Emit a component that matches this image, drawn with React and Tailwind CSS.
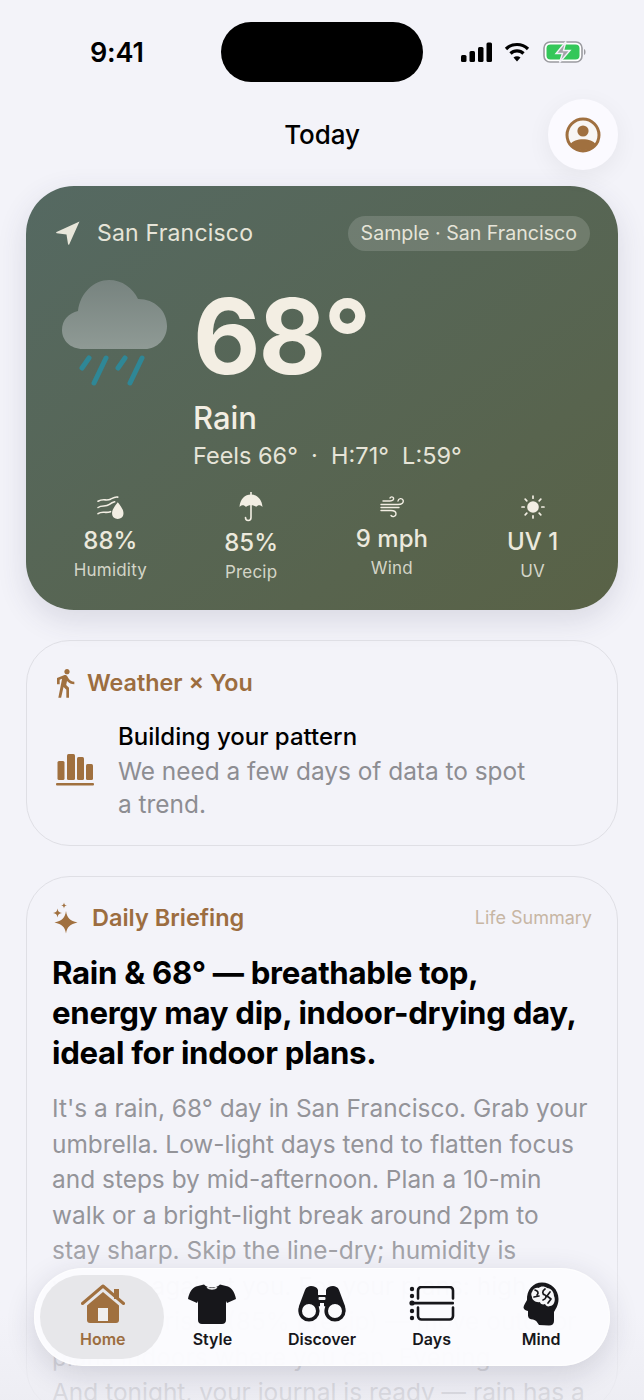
import React from "react";
import { MdDirectionsWalk } from "react-icons/md";

const FONT = { fontFamily: "Inter, 'Noto Sans', sans-serif" };

function StatusIcons() {
  return (
    <div className="flex items-center">
      <svg width="32" height="20" viewBox="0 0 32 20" fill="#000">
        <rect x="0" y="13" width="5.5" height="7" rx="1.5" />
        <rect x="8.5" y="9" width="5.5" height="11" rx="1.5" />
        <rect x="17" y="5" width="5.5" height="15" rx="1.5" />
        <rect x="25.5" y="0.5" width="5.5" height="19.5" rx="1.5" />
      </svg>
      <svg width="26" height="20" viewBox="0 0 25 20" fill="none" stroke="#000" strokeWidth="3.2" className="ml-[11px]">
        <path d="M1.5 7 C7.5 1 17.5 1 23.5 7" />
        <path d="M6 11.5 C9.5 8 15.5 8 19 11.5" />
        <path d="M12.5 19.5 L9 15.5 C11 13.8 14 13.8 16 15.5 Z" fill="#000" stroke="none" />
      </svg>
      <svg width="44" height="22" viewBox="0 0 44 22" className="ml-[13px]">
        <rect x="1" y="1" width="38" height="20" rx="6" fill="#fff" stroke="#9b9ba0" strokeWidth="1.6" />
        <rect x="3.5" y="3.5" width="33" height="15" rx="4" fill="#34c759" />
        <path d="M41 8 C43 8.5 43 13.5 41 14 Z" fill="#9b9ba0" />
        <path d="M23 0.5 L13 12.5 H19.5 L16.5 21.5 L27 9.5 H20.5 Z" fill="#a3a3a8" stroke="#f3f3f9" strokeWidth="1.4" />
      </svg>
    </div>
  );
}

function AvatarIcon() {
  return (
    <svg width="36" height="36" viewBox="0 0 36 36">
      <circle cx="18" cy="18" r="16" fill="#f8f6f4" stroke="#a0703f" strokeWidth="3" />
      <circle cx="18" cy="14" r="5.6" fill="#a0703f" />
      <path d="M5.5 27 C9 20.5 27 20.5 30.5 27 C27 35 9 35 5.5 27 Z" fill="#a0703f" />
    </svg>
  );
}

function CloudRain() {
  return (
    <svg width="106" height="106" viewBox="0 0 106 106">
      <defs>
        <linearGradient id="cloudFill" x1="0" y1="0" x2="0" y2="1">
          <stop offset="0" stopColor="#77837f" />
          <stop offset="1" stopColor="#8f9a95" />
        </linearGradient>
      </defs>
      <path
        d="M21 69 C8 69 0 60 0 50 C0 40 7 33 16 31 C18 13 32 0 47 0 C60 0 71 8 76 19 C93 19 105 31 105 46 C105 59 95 69 83 69 Z"
        fill="url(#cloudFill)"
      />
      <g stroke="#2f8796" strokeWidth="5" strokeLinecap="round" fill="none">
        <path d="M27 78 L20 88" />
        <path d="M44 78 L32 103" />
        <path d="M63 78 L56 88" />
        <path d="M80 78 L68 103" />
      </g>
    </svg>
  );
}

function HumidityIcon() {
  return (
    <svg width="27" height="25" viewBox="0 0 26 24" fill="none" stroke="#f2eee3" strokeWidth="1.5" strokeLinecap="round">
      <path d="M1 6 C6 3 9 6 13 4 C15 3 17 1.5 20 2" />
      <path d="M1 12 C5 9 8 12 12 9 C14 7.5 15 7 17 6.5" />
      <path d="M1 18 C5 15 8 18 13 16" />
      <path d="M20 7 C17 11 14.5 14 14.5 17.5 C14.5 21 17 23 20 23 C23 23 25.5 21 25.5 17.5 C25.5 14 23 11 20 7 Z" fill="#f2eee3" stroke="none" />
    </svg>
  );
}

function UmbrellaIcon() {
  return (
    <svg width="24" height="30" viewBox="0 0 24 30" fill="none">
      <path d="M12 0 V3" stroke="#f2eee3" strokeWidth="1.6" />
      <path d="M0.5 15 C1 7 6 2.5 12 2.5 C18 2.5 23 7 23.5 15 C21.5 12.5 19 12.5 17 15 C15.5 12.5 8.5 12.5 7 15 C5 12.5 2.5 12.5 0.5 15 Z" fill="#f2eee3" />
      <path d="M12 13 V25.5 C12 29.5 6.5 29.5 6.5 25.5" stroke="#f2eee3" strokeWidth="1.6" strokeLinecap="round" />
    </svg>
  );
}

function WindIcon() {
  return (
    <svg width="24" height="22" viewBox="0 0 24 22" fill="none" stroke="#f2eee3" strokeWidth="1.4" strokeLinecap="round">
      <path d="M1 8.5 H18 C22 8.5 24 6.5 23 4 C22 2 18.5 2 18 5" />
      <path d="M1 11.5 H19" />
      <path d="M3 5 H10 C13 5 14 3.5 13.5 2 C13 0.5 10.5 0.5 10 2" />
      <path d="M1 14.5 H11 C14.5 14.5 16 16 16 18 C16 20.5 12.5 21.5 11 19.5" />
    </svg>
  );
}

function SunIcon() {
  return (
    <svg width="24" height="24" viewBox="0 0 24 24" fill="none" stroke="#f2eee3" strokeWidth="1.7" strokeLinecap="round">
      <circle cx="12" cy="12" r="5.8" fill="#f2eee3" stroke="none" />
      <path d="M12 1 V3.2 M12 20.8 V23 M1 12 H3.2 M20.8 12 H23 M4.2 4.2 L5.8 5.8 M18.2 18.2 L19.8 19.8 M19.8 4.2 L18.2 5.8 M5.8 18.2 L4.2 19.8" />
    </svg>
  );
}

function ChartIcon() {
  return (
    <svg width="38" height="33" viewBox="0 0 38 33" fill="#a0703f">
      <rect x="1.5" y="8" width="7" height="19" rx="1.5" />
      <rect x="11" y="1" width="8" height="26" rx="1.5" />
      <rect x="21" y="4" width="7" height="23" rx="1.5" />
      <rect x="30" y="11" width="7" height="16" rx="1.5" />
      <rect x="0" y="30" width="38" height="2.6" rx="1" />
    </svg>
  );
}

function SparkleIcon() {
  return (
    <svg width="26" height="32" viewBox="0 0 26 32" fill="#a0703f">
      <path d="M14 9 C15 16 18 19 25.5 20.5 C18 22 15 25 14 31.5 C13 25 10 22 2.5 20.5 C10 19 13 16 14 9 Z" />
      <path d="M5.5 6.5 C6 9.5 7 10.5 10 11 C7 11.5 6 12.5 5.5 15.5 C5 12.5 4 11.5 1 11 C4 10.5 5 9.5 5.5 6.5 Z" />
      <path d="M12 0.5 C12.3 2.5 13 3.2 15 3.5 C13 3.8 12.3 4.5 12 6.5 C11.7 4.5 11 3.8 9 3.5 C11 3.2 11.7 2.5 12 0.5 Z" />
    </svg>
  );
}

function HomeIcon() {
  return (
    <svg width="44" height="40" viewBox="0 0 44 40">
      <path d="M1.5 19.5 L22 2 L42.5 19.5" fill="none" stroke="#a0703f" strokeWidth="3" strokeLinecap="round" strokeLinejoin="round" />
      <rect x="33" y="5" width="5" height="10" fill="#a0703f" />
      <path d="M6 21.5 L22 8 L38 21.5 V36 C38 38 37 39 35 39 H9 C7 39 6 38 6 36 Z" fill="#a0703f" />
      <rect x="17" y="24" width="10" height="13" fill="#f0efef" />
    </svg>
  );
}

function ShirtIcon() {
  return (
    <svg width="48" height="40" viewBox="0 0 48 40" fill="#17171b">
      <path d="M16 0.5 C19 4.5 29 4.5 32 0.5 L40 2.5 C44 4 47 9 48 15 L39 19 L38 17 V36 C38 38.5 36.5 40 34 40 H14 C11.5 40 10 38.5 10 36 V17 L9 19 L0 15 C1 9 4 4 8 2.5 Z" />
      <path d="M18.5 3.5 C21 6.5 27 6.5 29.5 3.5 L28 2.8 C26 4.5 22 4.5 20 2.8 Z" fill="#e8e8ea" />
    </svg>
  );
}

function BinocularsIcon() {
  return (
    <svg width="48" height="36" viewBox="0 0 48 36">
      <path d="M7 4 C8 1 11 0 13 0 C16 0 19 1 20 4 V9 H28 V4 C29 1 32 0 35 0 C37 0 40 1 41 4 L47 20 C48 24 47 27 46 29 L26 20 V17 H22 V20 L2 29 C1 27 0 24 1 20 Z" fill="#17171b" />
      <rect x="20.5" y="11" width="7" height="3" rx="1" fill="#f4f4f6" />
      <circle cx="11" cy="25" r="8.8" fill="#fbfbfd" stroke="#17171b" strokeWidth="3.6" />
      <circle cx="37" cy="25" r="8.8" fill="#fbfbfd" stroke="#17171b" strokeWidth="3.6" />
    </svg>
  );
}

function DaysIcon() {
  return (
    <svg width="46" height="36" viewBox="0 0 46 36" fill="#17171b">
      <circle cx="3" cy="3" r="2.2" />
      <circle cx="3" cy="10" r="2.2" />
      <circle cx="3" cy="17" r="2.6" />
      <circle cx="3" cy="25" r="2.2" />
      <circle cx="3" cy="32" r="2.2" />
      <rect x="3" y="15.8" width="42" height="2.6" rx="1" />
      <path d="M9 12.5 V4.5 C9 2.5 10.5 1 12.5 1 H40.5 C42.5 1 44 2.5 44 4.5 V12.5 M44 21.5 V30 C44 32 42.5 33.5 40.5 33.5 H12.5 C10.5 33.5 9 32 9 30 V21.5" fill="none" stroke="#17171b" strokeWidth="2.6" strokeLinecap="round" />
    </svg>
  );
}

function MindIcon() {
  return (
    <svg width="36" height="44" viewBox="0 0 36 44">
      <path d="M19 0.5 C28 0.5 35.5 7.5 35.5 17 C35.5 23 33 26.5 31 30 V39 C31 42 29 43.5 26 43.5 L16 43 C14 40 13 38 10 37.5 C7 37.5 5 36 5 33.5 V29 C2.5 28.5 0.5 27 0.5 25.5 C0.5 23.5 3 20 4 18 C3.5 8 10 0.5 19 0.5 Z" fill="#17171b" />
      <path d="M9 10 C10 6 14 5 16 6 C17 4 22 4 24 6 C28 6 31 10 31 14 C33 18 31 24 27 24 C25 25 23 24 22 22 C20 23 17 22 17 20 C13 21 9 18 9 15 C8 13 8 11 9 10 Z" fill="#f6f6f8" />
      <path d="M12 8 C15 9 16 11 14 13 M11 15 L16 14 M22 7 C19 9 19 12 22 13 C24 14 23 17 20 18 M27 10 L24 14 L28 17 L25 21" fill="none" stroke="#17171b" strokeWidth="1.7" strokeLinecap="round" strokeLinejoin="round" />
    </svg>
  );
}

const stats = [
  { icon: <HumidityIcon />, value: "88%", label: "Humidity", shift: "mt-[3px]" },
  { icon: <UmbrellaIcon />, value: "85%", label: "Precip", shift: "mt-[5px]" },
  { icon: <WindIcon />, value: "9 mph", label: "Wind", shift: "mt-[1px]" },
  { icon: <SunIcon />, value: "UV 1", label: "UV", shift: "mt-[4px]" },
];

const tabs = [
  { icon: <HomeIcon />, label: "Home", active: true },
  { icon: <ShirtIcon />, label: "Style" },
  { icon: <BinocularsIcon />, label: "Discover" },
  { icon: <DaysIcon />, label: "Days" },
  { icon: <MindIcon />, label: "Mind" },
];

export default function App() {
  return (
    <div className="relative h-[1400px] w-[644px] overflow-hidden bg-[#f3f3f9]" style={FONT}>
      {/* status bar */}
      <div className="flex h-[104px] items-center justify-between pl-[90px] pr-[57px]">
        <span className="text-[27px] font-semibold leading-none tracking-[-0.2px] text-black">9:41</span>
        <StatusIcons />
      </div>
      <div className="absolute left-[221px] top-[22px] h-[60px] w-[202px] rounded-[30px] bg-black" />

      {/* header */}
      <div className="relative flex h-[64px] items-center justify-center pb-[2px]">
        <h1 className="text-[26px] font-medium leading-none tracking-[-0.1px] text-black">Today</h1>
        <div className="absolute right-[26px] top-[-5px] flex h-[71px] w-[70px] items-center justify-center rounded-full bg-[#fbfaff] shadow-[0_6px_24px_rgba(0,0,0,0.06)]">
          <AvatarIcon />
        </div>
      </div>

      <main className="mx-[26px] mt-[18px] flex flex-col gap-[30px]">
        {/* weather hero */}
        <section className="h-[424px] rounded-[48px] bg-gradient-to-br from-[#556962] to-[#596246] px-[30px] pt-[29px] shadow-[0_10px_30px_rgba(60,60,90,0.14)]">
          <div className="flex items-center justify-between">
            <div className="flex items-center gap-[17px]">
              <svg width="24" height="24" viewBox="0 0 24 24" fill="#e8e6da">
                <path d="M23.5 0.5 L0.5 11 C0 11.5 0 12 0.8 12.2 L10.5 13.5 L12 23 C12.2 24 13 24 13.3 23.2 Z" />
              </svg>
              <span className="text-[23px] leading-[36px] tracking-[0.2px] text-[#e6e4d8]">San Francisco</span>
            </div>
            <span className="mr-[-2px] rounded-full bg-white/15 px-[13px] py-[3px] text-[19.6px] leading-[29px] text-[#e6e4d8]">
              Sample · San Francisco
            </span>
          </div>
          <div className="mt-[28px] flex">
            <div className="ml-[6px] mt-[1px] w-[131px] shrink-0">
              <CloudRain />
            </div>
            <div>
              <div className="mt-[9px] flex h-[96px] items-center text-[104px] font-bold leading-none tracking-[-2px] text-[#f3eee3]">
                68°
              </div>
              <div className="mt-[15px] text-[31px] font-medium leading-[38px] text-[#f3eee3]">Rain</div>
              <div className="mt-[1px] whitespace-pre text-[23.5px] leading-[36px] text-[#e6e4d8]">
                Feels 66°  ·  H:71°  L:59°
              </div>
            </div>
          </div>
          <div className="ml-[-16px] mr-[-15px] mt-[18px] grid grid-cols-4">
            {stats.map((s) => (
              <div key={s.label} className="flex flex-col items-center">
                <div className="flex h-[30px] items-center justify-center">{s.icon}</div>
                <div className={`${s.shift} text-[24px] font-medium leading-[32px] text-[#ece9dd]`}>{s.value}</div>
                <div className="text-[17px] leading-[26px] tracking-[0.2px] text-[#d4d5c8]">{s.label}</div>
              </div>
            ))}
          </div>
        </section>

        {/* weather x you */}
        <section className="h-[206px] rounded-[44px] border border-[#dfdfe5] px-[25px] pt-[24px]">
          <div className="flex items-center gap-[6px]">
            <MdDirectionsWalk size={32} color="#a0703f" className="ml-[-3px]" />
            <h2 className="text-[23.3px] font-semibold leading-[36px] text-[#9c6d40]">Weather × You</h2>
          </div>
          <div className="ml-[4px] mt-[20px] flex items-center gap-[24px]">
            <div className="mt-[-3px] shrink-0">
              <ChartIcon />
            </div>
            <div>
              <div className="text-[24px] font-medium leading-[32px] text-black">Building your pattern</div>
              <p className="mt-[2px] whitespace-nowrap text-[24.4px] leading-[33px] text-[#8d8d92]">
                We need a few days of data to spot
                <br />a trend.
              </p>
            </div>
          </div>
        </section>

        {/* daily briefing */}
        <section className="rounded-[44px] border border-[#dfdfe5] px-[25px] pt-[23px]">
          <div className="flex items-center justify-between">
            <div className="flex items-center gap-[14px]">
              <SparkleIcon />
              <h2 className="text-[23.5px] font-semibold leading-[36px] text-[#9c6d40]">Daily Briefing</h2>
            </div>
            <span className="text-[18px] leading-[26px] text-[#c7b6a4]">Life Summary</span>
          </div>
          <h3 className="mt-[17px] whitespace-nowrap text-[31.2px] font-bold leading-[40px] tracking-[-0.3px] text-black">
            Rain &amp; 68° — breathable top,
            <br />
            energy may dip, indoor-drying day,
            <br />
            ideal for indoor plans.
          </h3>
          <p className="mt-[18px] whitespace-nowrap text-[24.45px] leading-[35.5px] text-[#949499]">
            It's a rain, 68° day in San Francisco. Grab your
            <br />
            umbrella. Low-light days tend to flatten focus
            <br />
            and steps by mid-afternoon. Plan a 10-min
            <br />
            walk or a bright-light break around 2pm to
            <br />
            stay sharp. Skip the line-dry; humidity is
            <br />
            working against you. For your plans: high
            <br />
            chance it rises (85% precip) — move outdoor
            <br />
            plans indoors where you can. Evening
            <br />
            And tonight, your journal is ready — rain has a
          </p>
        </section>
      </main>

      {/* fade behind the tab bar */}
      <div className="absolute inset-x-0 bottom-0 h-[170px] bg-gradient-to-b from-[#f3f3f9]/0 via-[#f3f3f9]/60 to-[#ececf2]/80" />

      {/* tab bar */}
      <nav className="absolute left-[34px] top-[1268px] grid h-[98px] w-[576px] grid-cols-5 items-center rounded-[49px] border border-white/70 bg-[#fbfbfe]/[0.97] px-[13px] shadow-[0_8px_30px_rgba(40,40,70,0.16)]">
        {tabs.map((t) => (
          <div key={t.label} className="relative flex h-[84px] flex-col items-center justify-end pb-[8px]">
            {t.active && <div className="absolute inset-y-0 left-[-8px] right-[-6px] rounded-[42px] bg-[#e7e7ea]" />}
            <div className="relative flex h-[46px] items-center justify-center">{t.icon}</div>
            <span className={`relative text-[16px] font-semibold leading-[24px] ${t.active ? "text-[#9c6d40]" : "text-[#17171b]"}`}>
              {t.label}
            </span>
          </div>
        ))}
      </nav>
    </div>
  );
}
